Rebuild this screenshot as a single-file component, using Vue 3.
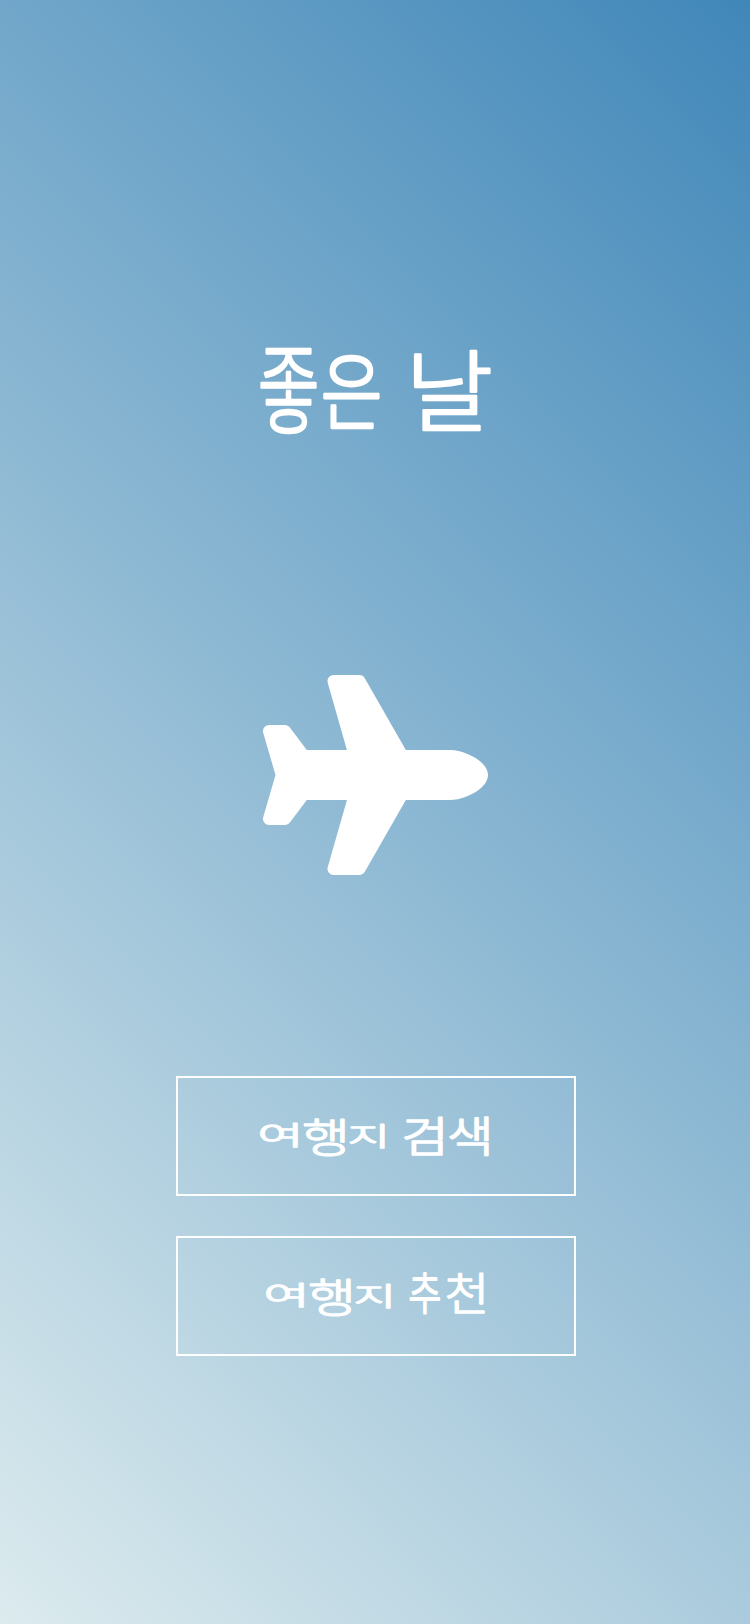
<script setup>
// Ink bounds of each syllable in em units: left, right, top, bottom.
const ink = {
  좋: [0.05, 0.87, -0.8, 0.08],
  은: [0.05, 0.87, -0.8, 0.06],
  날: [0.11, 0.93, -0.83, 0.08],
  여: [0.07, 0.79, -0.83, 0.08],
  행: [0.04, 0.79, -0.83, 0.08],
  지: [0.07, 0.79, -0.83, 0.08],
  검: [0.07, 0.79, -0.83, 0.07],
  색: [0.04, 0.79, -0.83, 0.08],
  추: [0.04, 0.88, -0.83, 0.08],
  천: [0.05, 0.79, -0.83, 0.06],
}

// Lettering: [syllable, left, right, top, bottom, stroke]
const place = (letters, size) =>
  letters.map(([ch, left, right, top, bottom, stroke]) => {
    const [l, r, t, b] = ink[ch.trim()]
    const sx = (right - left) / ((r - l) * size)
    const sy = (bottom - top) / ((b - t) * size)
    const x = left - l * size * sx
    const y = top - t * size * sy
    return { ch, stroke, transform: `translate(${x} ${y}) scale(${sx} ${sy})` }
  })

const title = place(
  [
    ['좋', 21, 76, 19, 103, 2.6],
    ['은 ', 84, 139, 26, 98, 3.2],
    ['날', 176, 254, 20, 101, 2.6],
  ],
  92,
)

const travel = (dx) => [
  ['여', 83 + dx, 119 + dx, 45, 69, 2.2],
  ['행', 126 + dx, 165 + dx, 41, 77, 1.7],
  ['지 ', 173 + dx, 206 + dx, 46, 70, 2.3],
]

const actions = [
  {
    label: '여행지 검색',
    letters: place([...travel(0), ['검', 227, 264, 39, 77, 1.8], ['색', 271, 309, 39, 77, 1.8]], 46),
  },
  {
    label: '여행지 추천',
    letters: place([...travel(6), ['추', 232, 262, 36, 76, 2.1], ['천', 269, 305, 36, 76, 1.6]], 46),
  },
]
</script>

<template>
  <main class="home">
    <h1 class="title">
      <svg class="title-lettering" viewBox="0 0 270 120">
        <text v-for="(g, i) in title" :key="i" :transform="g.transform" :stroke-width="g.stroke">{{ g.ch }}</text>
      </svg>
    </h1>
    <svg class="plane" viewBox="0 0 576 512" aria-hidden="true">
      <path
        d="M480 192H365.71L260.61 8.06A16.014 16.014 0 0 0 246.71 0h-65.5c-10.63 0-18.3 10.17-15.38 20.39L214.86 192H112l-43.2-57.6c-3.02-4.03-7.77-6.4-12.8-6.4H16.01C5.6 128-2.04 137.78.49 147.88L32 256 .49 364.12C-2.04 374.22 5.6 384 16.01 384H56c5.04 0 9.78-2.37 12.8-6.4L112 320h102.86l-49.03 171.6c-2.92 10.22 4.75 20.4 15.38 20.4h65.5c5.74 0 11.04-3.08 13.89-8.06L365.71 320H480c35.35 0 96-28.65 96-64s-60.65-64-96-64z"
      />
    </svg>
    <nav class="actions">
      <button v-for="a in actions" :key="a.label" class="action" type="button" :aria-label="a.label">
        <svg class="action-lettering" viewBox="0 0 396 116">
          <text v-for="(g, i) in a.letters" :key="i" :transform="g.transform" :stroke-width="g.stroke">{{ g.ch }}</text>
        </svg>
      </button>
    </nav>
  </main>
</template>

<style>
body {
  margin: 0;
}
</style>

<style scoped>
.home {
  box-sizing: border-box;
  width: 100%;
  height: 1624px;
  padding-top: 330px;
  display: flex;
  flex-direction: column;
  align-items: center;
  color: #fff;
  background: linear-gradient(45deg, #dcebee 0%, #4087b9 100%);
}

svg {
  overflow: visible;
}

text {
  font-family: 'Noto Sans CJK KR', sans-serif;
  fill: #fff;
  stroke: #fff;
  stroke-linejoin: round;
  stroke-linecap: round;
}

.title {
  margin: 0;
  height: 120px;
}

.title-lettering {
  display: block;
  width: 270px;
  height: 120px;
}

.title-lettering text {
  font-size: 92px;
  font-weight: 300;
}

.plane {
  display: block;
  width: 225px;
  height: 200px;
  margin-top: 225px;
  fill: #fff;
}

.actions {
  margin: 201px 0 0 2px;
  display: flex;
  flex-direction: column;
  gap: 40px;
}

.action {
  box-sizing: border-box;
  width: 400px;
  height: 120px;
  padding: 0;
  border: 2px solid #fff;
  background: transparent;
}

.action-lettering {
  display: block;
  width: 396px;
  height: 116px;
}

.action-lettering text {
  font-size: 46px;
  font-weight: 300;
}
</style>
